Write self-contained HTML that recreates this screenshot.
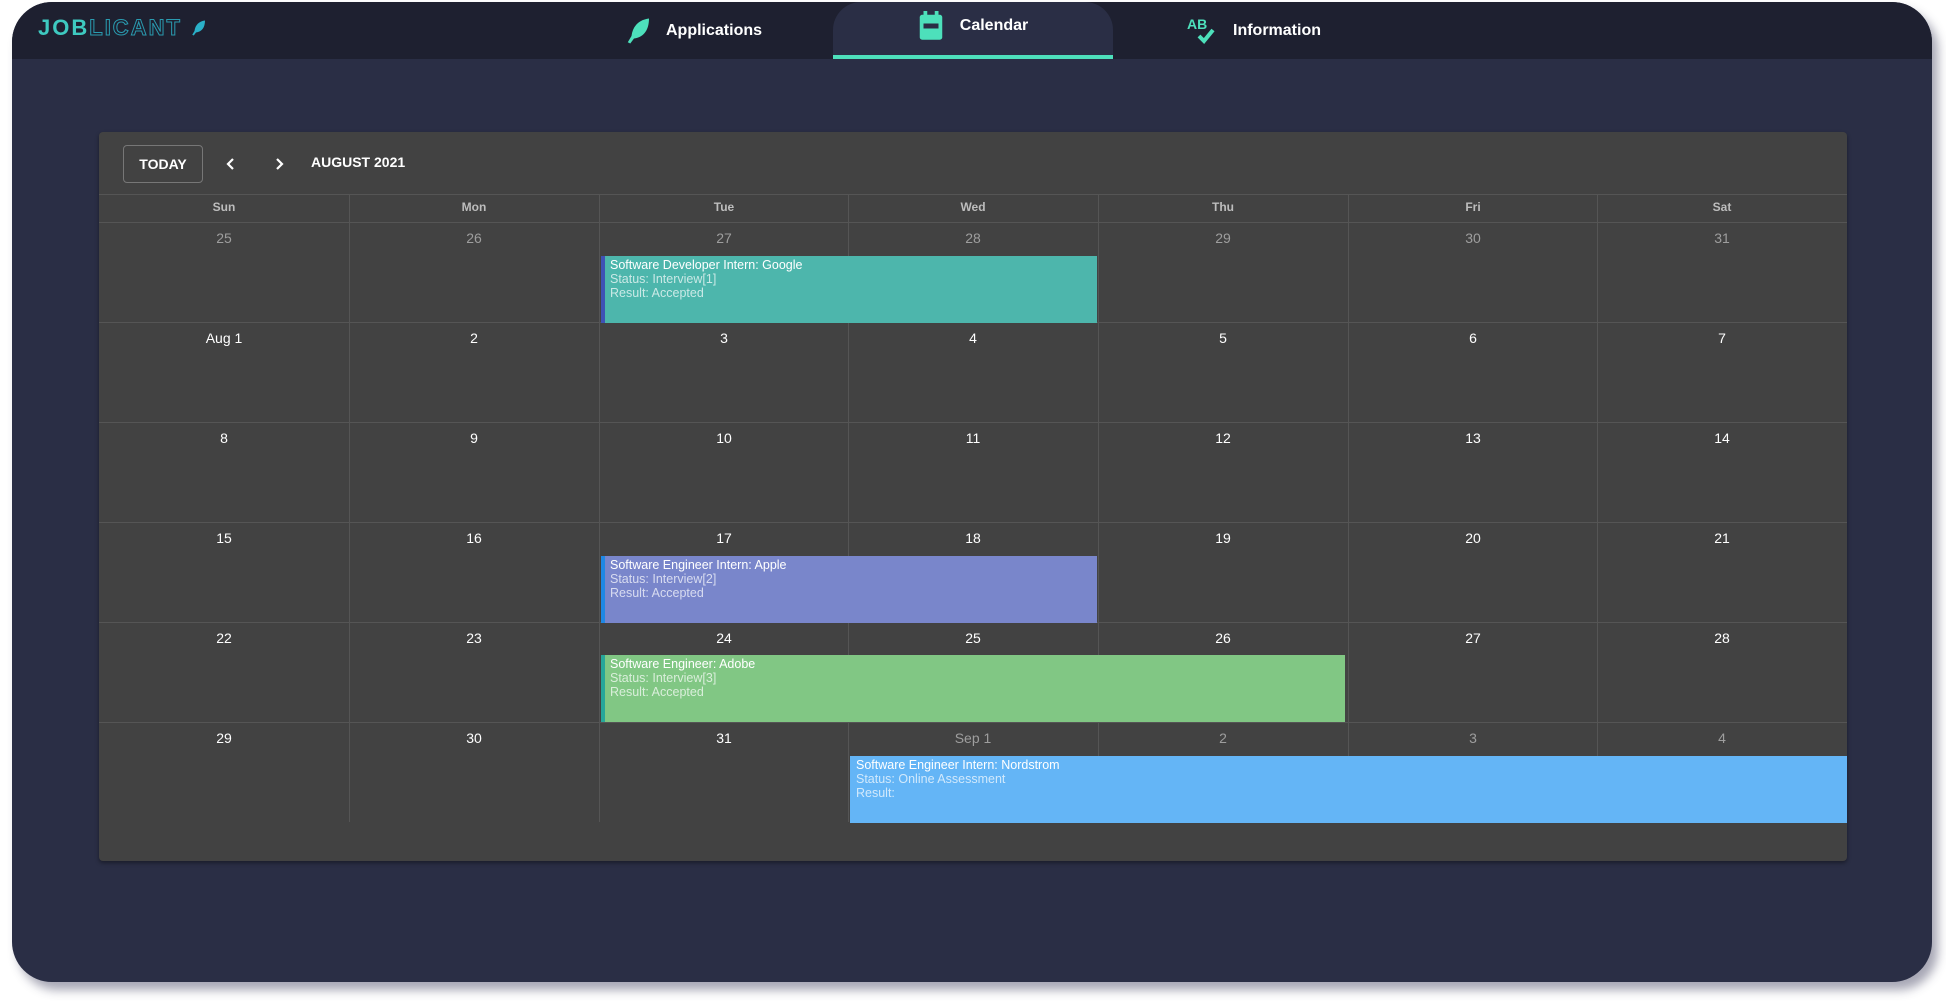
<!DOCTYPE html>
<html><head><meta charset="utf-8"><style>
*{margin:0;padding:0;box-sizing:border-box}
body{width:1946px;height:1008px;background:#fff;position:relative;overflow:hidden;font-family:"Liberation Sans",sans-serif}
.frame{position:absolute;left:12px;top:2px;width:1920px;height:980px;border-radius:40px;background:#2a2e45;overflow:hidden;box-shadow:6px 8px 10px rgba(60,60,90,.45)}
.hdr{position:absolute;left:0;top:0;width:100%;height:57px;background:#1e2030}
.logo{position:absolute;left:26px;top:13px;font-size:22px;font-weight:bold;letter-spacing:2px;color:#3ec9c0}
.logo .o{color:transparent;-webkit-text-stroke:1px #2a9bb0}
.tab{position:absolute;top:0;height:57px;color:#fff;font-weight:bold;font-size:16px;display:flex;align-items:center}
.tab.act{background:#2a2e45;border-radius:28px 28px 0 0;border-bottom:4px solid #4de0bb;justify-content:center}
.card{position:absolute;left:87px;top:130px;width:1748px;height:729px;background:#424242;border-radius:4px;box-shadow:0 2px 4px rgba(0,0,0,.4)}
.btn{position:absolute;left:24px;top:13px;width:80px;height:38px;border:1px solid #777;border-radius:4px;color:#fff;font-size:14px;font-weight:bold;display:flex;align-items:center;justify-content:center}
.t{position:absolute;color:#fff;font-weight:bold;font-size:14px}
.hl{position:absolute;left:0;width:1748px;height:1px;background:#555}
.vl{position:absolute;width:1px;background:#555}
.dh{position:absolute;top:68px;width:250px;text-align:center;font-size:12px;font-weight:bold;color:#bdbdbd}
.d{position:absolute;width:250px;text-align:center;font-size:14px;color:#fff}
.d.g{color:#9e9e9e}
.ev{position:absolute;height:67px;font-size:12.5px;padding:2px 0 0 5px;line-height:14px;color:rgba(255,255,255,.7)}
.ev b{font-weight:normal;color:#fff;display:block}
</style></head><body>
<div class="frame">
<div class="hdr">
<div class="logo">JOB<span class="o">LICANT</span> <svg width="18" height="18" viewBox="0 0 24 24" style="vertical-align:-2px"><path d="M20 2C12 3 7 8 6 16L3 21l2 1 3-4c8-1 12-7 12-16z" fill="#2ab0c8"/></svg></div>
<div class="tab" style="left:612px"><svg width="30" height="30" viewBox="0 0 24 24" style="margin-right:12px"><path d="M20 2C12 3 7 8 6 16L3 21l2 1 3-4c8-1 12-7 12-16z" fill="#4de0bb"/></svg>Applications</div>
<div class="tab act" style="left:821px;width:280px"><svg width="26" height="30" viewBox="0 0 20 24" style="margin-right:16px;margin-top:-6px"><rect x="4" y="0" width="3" height="4" fill="#4de0bb"/><rect x="13" y="0" width="3" height="4" fill="#4de0bb"/><rect x="1" y="3" width="18" height="20" rx="2" fill="#4de0bb"/><rect x="4" y="10" width="12" height="4" fill="#2a2e45"/></svg><span style="margin-top:-6px">Calendar</span></div>
<div class="tab" style="left:1175px"><svg width="34" height="34" viewBox="0 0 34 34" style="margin-right:12px"><text x="0" y="15" font-size="14" font-weight="bold" fill="#4de0bb" font-family="Liberation Sans">AB</text><path d="M12 22l5 5 9-11" stroke="#4de0bb" stroke-width="4" fill="none"/></svg>Information</div>
</div>
<div class="card">
<div class="btn">TODAY</div>
<svg style="position:absolute;left:126px;top:24px" width="12" height="16" viewBox="0 0 12 16"><path d="M8 3L3 8l5 5" stroke="#fff" stroke-width="2.2" fill="none"/></svg>
<svg style="position:absolute;left:174px;top:24px" width="12" height="16" viewBox="0 0 12 16"><path d="M4 3l5 5-5 5" stroke="#fff" stroke-width="2.2" fill="none"/></svg>
<div class="t" style="left:212px;top:22px">AUGUST 2021</div>
<div class="hl" style="top:62px"></div>
<div class="hl" style="top:90px"></div>
<div class="hl" style="top:190px"></div>
<div class="hl" style="top:290px"></div>
<div class="hl" style="top:390px"></div>
<div class="hl" style="top:490px"></div>
<div class="hl" style="top:590px"></div>
<div class="vl" style="left:250px;top:62px;height:628px"></div>
<div class="vl" style="left:500px;top:62px;height:628px"></div>
<div class="vl" style="left:749px;top:62px;height:628px"></div>
<div class="vl" style="left:999px;top:62px;height:628px"></div>
<div class="vl" style="left:1249px;top:62px;height:628px"></div>
<div class="vl" style="left:1498px;top:62px;height:628px"></div>
<div class="dh" style="left:0">Sun</div><div class="dh" style="left:250px">Mon</div><div class="dh" style="left:500px">Tue</div><div class="dh" style="left:749px">Wed</div><div class="dh" style="left:999px">Thu</div><div class="dh" style="left:1249px">Fri</div><div class="dh" style="left:1498px">Sat</div>
<div id="days"></div>
<div class="ev" style="left:502px;top:124px;width:496px;background:#4db6ac;border-left:4px solid #3f51b5"><b>Software Developer Intern: Google</b>Status: Interview[1]<br>Result: Accepted</div>
<div class="ev" style="left:502px;top:424px;width:496px;background:#7986cb;border-left:4px solid #1e88e5"><b>Software Engineer Intern: Apple</b>Status: Interview[2]<br>Result: Accepted</div>
<div class="ev" style="left:502px;top:523px;width:744px;background:#81c784;border-left:4px solid #26a69a"><b>Software Engineer: Adobe</b>Status: Interview[3]<br>Result: Accepted</div>
<div class="ev" style="left:751px;top:624px;width:997px;background:#64b5f6;padding-left:6px"><b>Software Engineer Intern: Nordstrom</b>Status: Online Assessment<br>Result:</div>
</div>
</div>
<script>
var c=document.getElementById('days'),h='';
var x=[0,250,500,749,999,1249,1498];
var rows=[['25','26','27','28','29','30','31'],['Aug 1','2','3','4','5','6','7'],['8','9','10','11','12','13','14'],['15','16','17','18','19','20','21'],['22','23','24','25','26','27','28'],['29','30','31','Sep 1','2','3','4']];
rows.forEach(function(r,i){r.forEach(function(d,j){var g=(i==0)||(i==5&&j>=3);h+='<div class="d'+(g?' g':'')+'" style="left:'+x[j]+'px;top:'+(98+i*100)+'px">'+d+'</div>';});});
c.innerHTML=h;
</script>
</body></html>
